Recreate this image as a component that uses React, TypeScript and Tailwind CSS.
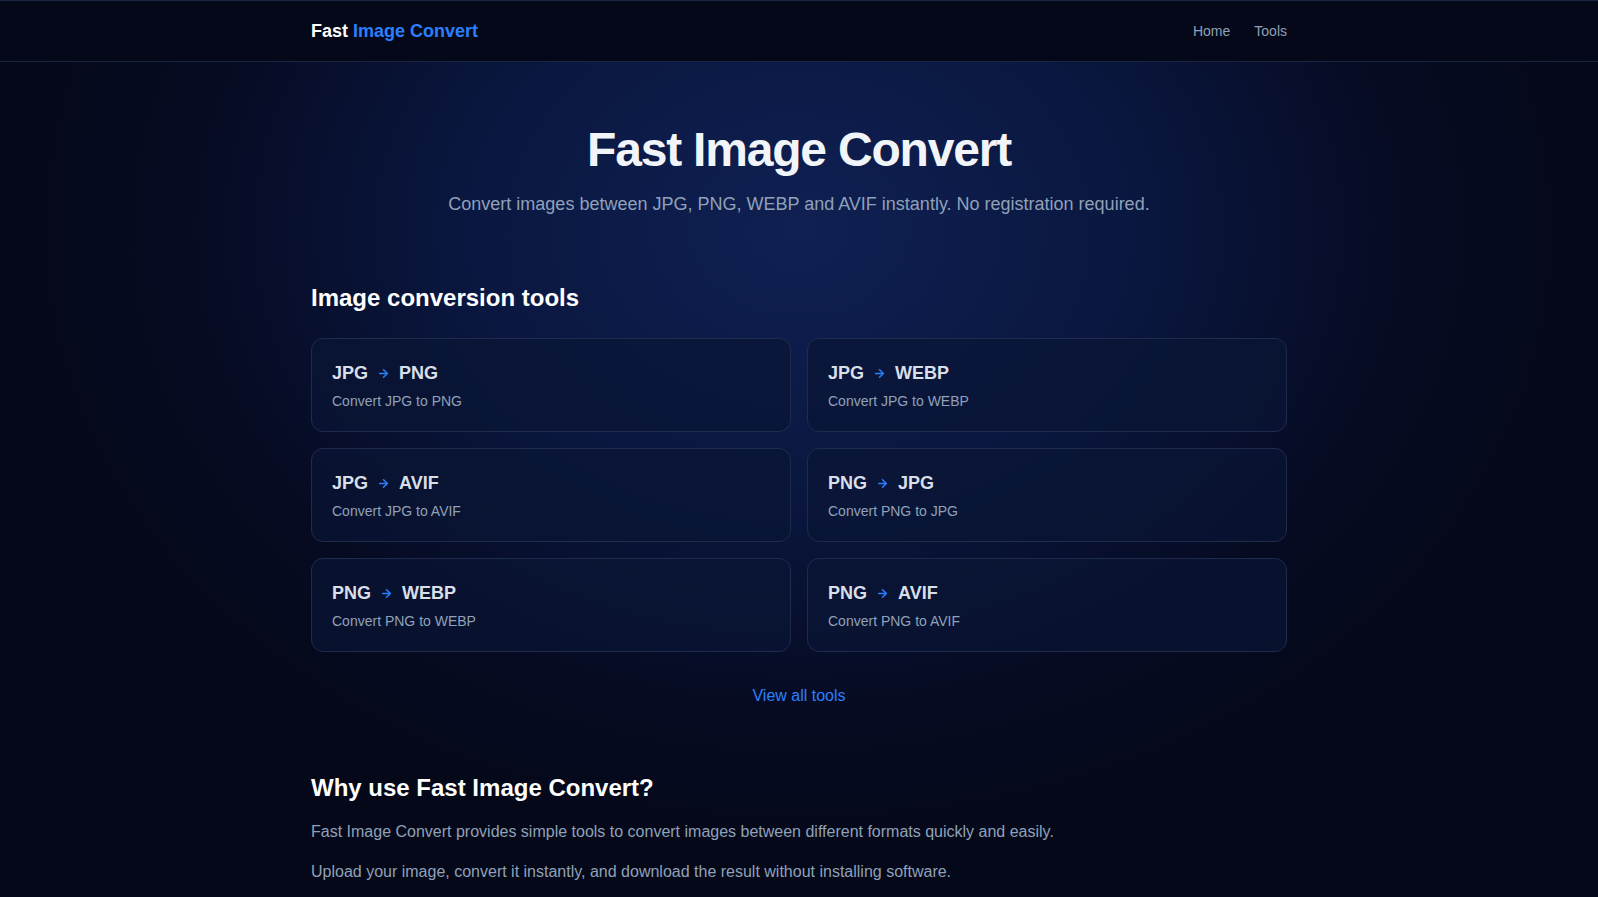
import React from 'react';
import { ArrowRight } from 'lucide-react';

const tools = [
  { from: 'JPG', to: 'PNG' },
  { from: 'JPG', to: 'WEBP' },
  { from: 'JPG', to: 'AVIF' },
  { from: 'PNG', to: 'JPG' },
  { from: 'PNG', to: 'WEBP' },
  { from: 'PNG', to: 'AVIF' },
];

const ToolCard: React.FC<{ from: string; to: string }> = ({ from, to }) => (
  <a
    href="#"
    className="block rounded-xl border border-[#1f2b4d] bg-[#0a1534]/70 p-5 hover:border-blue-500/50"
  >
    <div className="flex items-center text-lg font-bold leading-7 text-[#d9dfe9]">
      <span>{from}</span>
      <ArrowRight className="mx-[9px] h-[13px] w-[13px] text-blue-500" strokeWidth={2.75} />
      <span>{to}</span>
    </div>
    <p className="mt-1 text-sm text-slate-400">
      Convert {from} to {to}
    </p>
  </a>
);

export default function App() {
  return (
    <div className="min-h-screen bg-[#050818] bg-[radial-gradient(ellipse_820px_640px_at_50%_230px,#0f2052_0%,#0a1740_40%,#060b22_75%,#050818_100%)] font-['Liberation_Sans',Arial,sans-serif] text-slate-200">
      <header className="border-t border-b border-[#1a2540] bg-[#050818]">
        <div className="mx-auto flex h-[60px] max-w-5xl items-center justify-between px-6">
          <a href="#" className="text-lg font-bold text-white">
            Fast <span className="text-blue-500">Image Convert</span>
          </a>
          <nav className="flex gap-6 text-sm text-slate-400">
            <a href="#">Home</a>
            <a href="#">Tools</a>
          </nav>
        </div>
      </header>

      <main className="mx-auto max-w-5xl px-6 pb-16">
        <section className="pt-16 text-center">
          <h1 className="text-5xl font-bold leading-none tracking-tight text-slate-100">
            Fast Image Convert
          </h1>
          <p className="mt-4 text-lg text-slate-400">
            Convert images between JPG, PNG, WEBP and AVIF instantly. No registration required.
          </p>
        </section>

        <section className="mt-16">
          <h2 className="mb-6 text-2xl font-bold text-white">Image conversion tools</h2>
          <div className="grid grid-cols-2 gap-4">
            {tools.map((t) => (
              <ToolCard key={t.from + t.to} from={t.from} to={t.to} />
            ))}
          </div>
          <div className="mt-8 text-center">
            <a href="#" className="text-base text-blue-500">
              View all tools
            </a>
          </div>
        </section>

        <section className="mt-16">
          <h2 className="mb-4 text-2xl font-bold text-white">Why use Fast Image Convert?</h2>
          <div className="space-y-4 text-base text-slate-400">
            <p>Fast Image Convert provides simple tools to convert images between different formats quickly and easily.</p>
            <p>Upload your image, convert it instantly, and download the result without installing software.</p>
          </div>
        </section>
      </main>
    </div>
  );
}
